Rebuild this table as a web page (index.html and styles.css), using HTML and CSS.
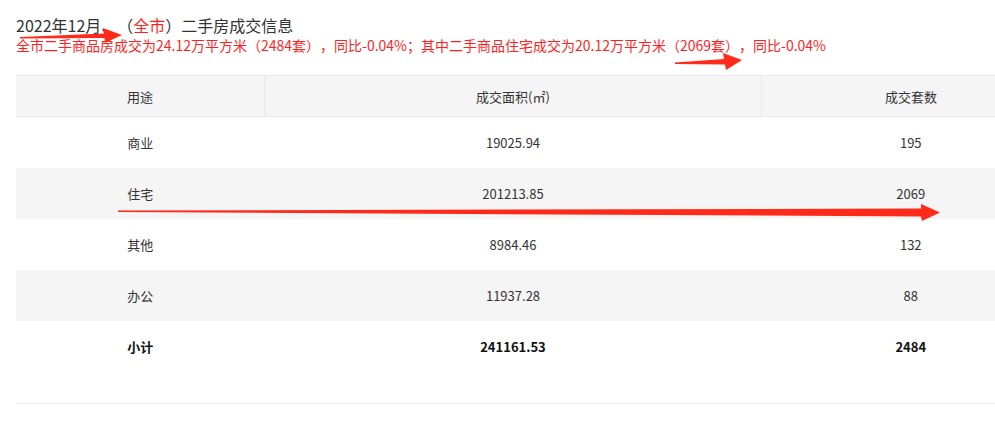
FILE: index.html
```html
<!DOCTYPE html>
<html lang="zh">
<head>
<meta charset="utf-8">
<title>二手房成交信息</title>
<link rel="stylesheet" href="styles.css">
</head>
<body>
<div class="page">
  <h1 class="title">2022年12月、（<span class="red">全市</span>）二手房成交信息</h1>
  <p class="summary">全市二手商品房成交为24.12万平方米（2484套），同比-0.04%；其中二手商品住宅成交为20.12万平方米（2069套），同比-0.04%</p>
  <div class="table-wrap">
    <table class="deals">
      <thead>
        <tr><th class="c1">用途</th><th class="c2">成交面积(㎡)</th><th class="c3">成交套数</th></tr>
      </thead>
      <tbody>
        <tr><td>商业</td><td>19025.94</td><td>195</td></tr>
        <tr class="alt"><td>住宅</td><td>201213.85</td><td>2069</td></tr>
        <tr><td>其他</td><td>8984.46</td><td>132</td></tr>
        <tr class="alt"><td>办公</td><td>11937.28</td><td>88</td></tr>
        <tr class="total"><td>小计</td><td>241161.53</td><td>2484</td></tr>
      </tbody>
    </table>
    <div class="rule"></div>
  </div>

  <svg class="arrows" width="995" height="428" viewBox="0 0 995 428" aria-hidden="true">
    <polygon fill="#ff2a1a" points="20,37 104,33.5 103,28 122,35 105,43 104.5,38 20,38.5"/>
    <polygon fill="#ff2a1a" points="675,62.5 724,59 723,53 742,60 726,70 725,64.5 675,64"/>
    <polygon fill="#ff2a1a" points="118,210.5 921,208.5 921,204 940,212.5 922,221 921,216.5 118,212"/>
  </svg>
</div>
</body>
</html>
```
FILE: styles.css
```css
html, body {
  margin: 0;
  padding: 0;
  background: #fff;
  overflow: hidden;
}
body {
  font-family: "Microsoft YaHei", "Noto Sans CJK SC", "Noto Sans", sans-serif;
  color: #333;
  width: 995px;
  height: 428px;
  text-spacing-trim: space-all;
}
.page {
  position: relative;
  padding: 14px 0 0 16px;
}
.title {
  margin: 0;
  font-size: 16px;
  font-weight: normal;
  line-height: 22px;
  color: #333;
}
.red { color: #ff1f1f; }
.summary {
  margin: 0;
  font-size: 14px;
  line-height: 19px;
  color: #ff1f1f;
  white-space: nowrap;
}
.table-wrap {
  margin-top: 20px;
  width: 979px;
  overflow: hidden;
}
.deals {
  width: 1042px;
  border-collapse: collapse;
  table-layout: fixed;
  font-size: 13px;
}
.deals th {
  background: #f5f5f5;
  font-weight: normal;
  height: 40px;
  padding: 0;
  border-top: 1px solid #e8e8e8;
  border-bottom: 1px solid #e8e8e8;
  border-left: 1px solid #e8e8e8;
  text-align: center;
}
.deals th.c1 { width: 248px; border-left: none; }
.deals th.c2 { width: 496px; }
.deals th.c3 { width: 298px; }
.deals td {
  height: 51px;
  padding: 0;
  text-align: center;
}
.deals tr.alt td { background: #f5f5f5; }
.deals tr.total td { font-weight: bold; color: #111; }
.rule {
  margin-top: 31px;
  width: 1042px;
  border-top: 1px solid #e6e6e6;
}
.arrows {
  position: absolute;
  left: 0;
  top: 0;
  pointer-events: none;
}
```
